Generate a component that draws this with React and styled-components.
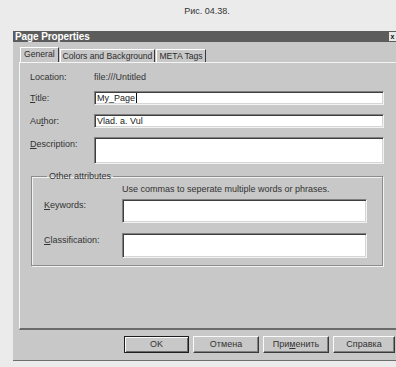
import React from 'react';
import styled, { createGlobalStyle } from 'styled-components';

const GlobalStyle = createGlobalStyle`
  html, body {
    margin: 0;
    padding: 0;
    overflow: hidden;
    background: #ebebeb;
  }
  body {
    font-family: "Liberation Sans", Arial, sans-serif;
    color: #2c2c2c;
  }
`;

const Page = styled.div`
  width: 396px;
  height: 367px;
  overflow: hidden;
  background: #ebebeb;
`;

const Caption = styled.div`
  height: 31px;
  padding: 5px 0 0 18px;
  box-sizing: border-box;
  text-align: center;
  font-size: 9px;
  line-height: 12px;
  color: #333;
`;

const Dialog = styled.div`
  margin-left: 13px;
  width: 383px;
  height: 330px;
  box-sizing: border-box;
  background: #c8c8c8;
  border-bottom: 1px solid #6e6e6e;
  display: flex;
  flex-direction: column;
`;

const TitleBar = styled.div`
  height: 11px;
  background: #5c5c5c;
  display: flex;
  align-items: center;
  justify-content: space-between;
  padding-left: 2px;
`;

const TitleText = styled.div`
  color: #fff;
  font-weight: bold;
  font-size: 10px;
  line-height: 11px;
  letter-spacing: -0.1px;
`;

const CloseBox = styled.div`
  width: 7px;
  height: 9px;
  background: #e8e8e8;
  color: #111;
  font-size: 7px;
  line-height: 9px;
  font-weight: bold;
  text-align: center;
`;

const Body = styled.div`
  flex: 1;
  display: flex;
  flex-direction: column;
  padding: 5px 0 0 6px;
`;

const TabStrip = styled.div`
  height: 15px;
  display: flex;
  align-items: flex-end;
  padding-left: 1px;
`;

const Tab = styled.div`
  height: ${(p) => (p.$active ? 15 : 13)}px;
  box-sizing: border-box;
  padding: 0 ${(p) => (p.$active ? 3 : 2)}px;
  border-top: 1px solid #fff;
  border-left: 1px solid #fff;
  border-right: 1px solid #3a3a3a;
  font-size: 8.6px;
  line-height: ${(p) => (p.$active ? 13 : 12)}px;
  color: #2c2c2c;
  white-space: nowrap;
  margin-right: 1px;
`;

const Panel = styled.div`
  height: 268px;
  box-sizing: border-box;
  border-top: 1px solid #f4f4f4;
  border-left: 1px solid #f4f4f4;
  border-bottom: 2px solid #6a6a6a;
  padding: 7px 0 0 10px;
  display: flex;
  flex-direction: column;
`;

const Row = styled.div`
  display: flex;
  align-items: flex-start;
  margin-top: ${(p) => p.$gap || 0}px;
`;

const Label = styled.div`
  width: ${(p) => p.$w}px;
  flex-shrink: 0;
  font-size: 9px;
  line-height: ${(p) => p.$lh || 14}px;
  color: #333;
`;

const Value = styled.div`
  font-size: 9px;
  line-height: 14px;
  color: #333;
`;

const Field = styled.div`
  width: ${(p) => p.$w}px;
  height: ${(p) => p.$h}px;
  box-sizing: border-box;
  background: #fff;
  border: 1px solid;
  border-color: #808080 #f2f2f2 #f2f2f2 #808080;
  box-shadow: inset 1px 1px 0 #3e3e3e, inset -1px -1px 0 #d6d6d6;
  padding: 0 2px;
  font-size: 9px;
  line-height: 12px;
  color: #222;
  display: flex;
  align-items: flex-start;
`;

const Caret = styled.span`
  display: inline-block;
  width: 1px;
  height: 10px;
  margin: 1px 0 0 1px;
  background: #111;
`;

const Group = styled.fieldset`
  margin: 6px 0 0 1px;
  width: 352px;
  height: 96px;
  box-sizing: border-box;
  border: 1px solid #8c8c8c;
  box-shadow: 1px 1px 0 #f2f2f2, inset 1px 1px 0 #f2f2f2;
  padding: 0 15px 0 12px;
`;

const Legend = styled.legend`
  font-size: 9px;
  line-height: 12px;
  padding: 0 2px;
  margin-left: 3px;
  color: #333;
`;

const Hint = styled.div`
  margin: 1px 0 0 78px;
  font-size: 9px;
  line-height: 12px;
  color: #333;
`;

const ButtonRow = styled.div`
  display: flex;
  margin-top: 6px;
  padding-left: 105px;
  gap: 4px;
`;

const Button = styled.div`
  width: ${(p) => p.$w}px;
  height: 17px;
  box-sizing: border-box;
  border: 1px solid;
  border-color: ${(p) => (p.$default ? '#1e1e1e' : '#fafafa #3a3a3a #3a3a3a #fafafa')};
  box-shadow: ${(p) =>
    p.$default
      ? 'inset 1px 1px 0 #fafafa, inset -1px -1px 0 #6a6a6a'
      : 'inset -1px -1px 0 #808080'};
  font-size: 9px;
  line-height: 15px;
  text-align: center;
  color: #333;
  background: #c8c8c8;
`;

const U = styled.span`
  text-decoration: underline;
`;

const App = () => (
  <Page>
    <GlobalStyle />
    <Caption>Рис. 04.38.</Caption>
    <Dialog>
      <TitleBar>
        <TitleText>Page Properties</TitleText>
        <CloseBox>x</CloseBox>
      </TitleBar>
      <Body>
        <TabStrip>
          <Tab $active>General</Tab>
          <Tab>Colors and Background</Tab>
          <Tab>META Tags</Tab>
        </TabStrip>
        <Panel>
          <Row>
            <Label $w={64}>Location:</Label>
            <Value>file:///Untitled</Value>
          </Row>
          <Row $gap={7}>
            <Label $w={64}>
              <U>T</U>itle:
            </Label>
            <Field $w={290} $h={14}>
              My_Page
              <Caret />
            </Field>
          </Row>
          <Row $gap={9}>
            <Label $w={64}>
              Au<U>t</U>hor:
            </Label>
            <Field $w={290} $h={14}>Vlad. a. Vul</Field>
          </Row>
          <Row $gap={9}>
            <Label $w={64}>
              <U>D</U>escription:
            </Label>
            <Field $w={290} $h={27} />
          </Row>
          <Group>
            <Legend>Other attributes</Legend>
            <Hint>Use commas to seperate multiple words or phrases.</Hint>
            <Row $gap={4}>
              <Label $w={78} $lh={12}>
                <U>K</U>eywords:
              </Label>
              <Field $w={245} $h={24} />
            </Row>
            <Row $gap={10}>
              <Label $w={78} $lh={14}>
                <U>C</U>lassification:
              </Label>
              <Field $w={245} $h={25} />
            </Row>
          </Group>
        </Panel>
        <ButtonRow>
          <Button $w={65} $default>
            OK
          </Button>
          <Button $w={66}>Отмена</Button>
          <Button $w={66}>
            При<U>м</U>енить
          </Button>
          <Button $w={62}>Справка</Button>
        </ButtonRow>
      </Body>
    </Dialog>
  </Page>
);

export default App;
